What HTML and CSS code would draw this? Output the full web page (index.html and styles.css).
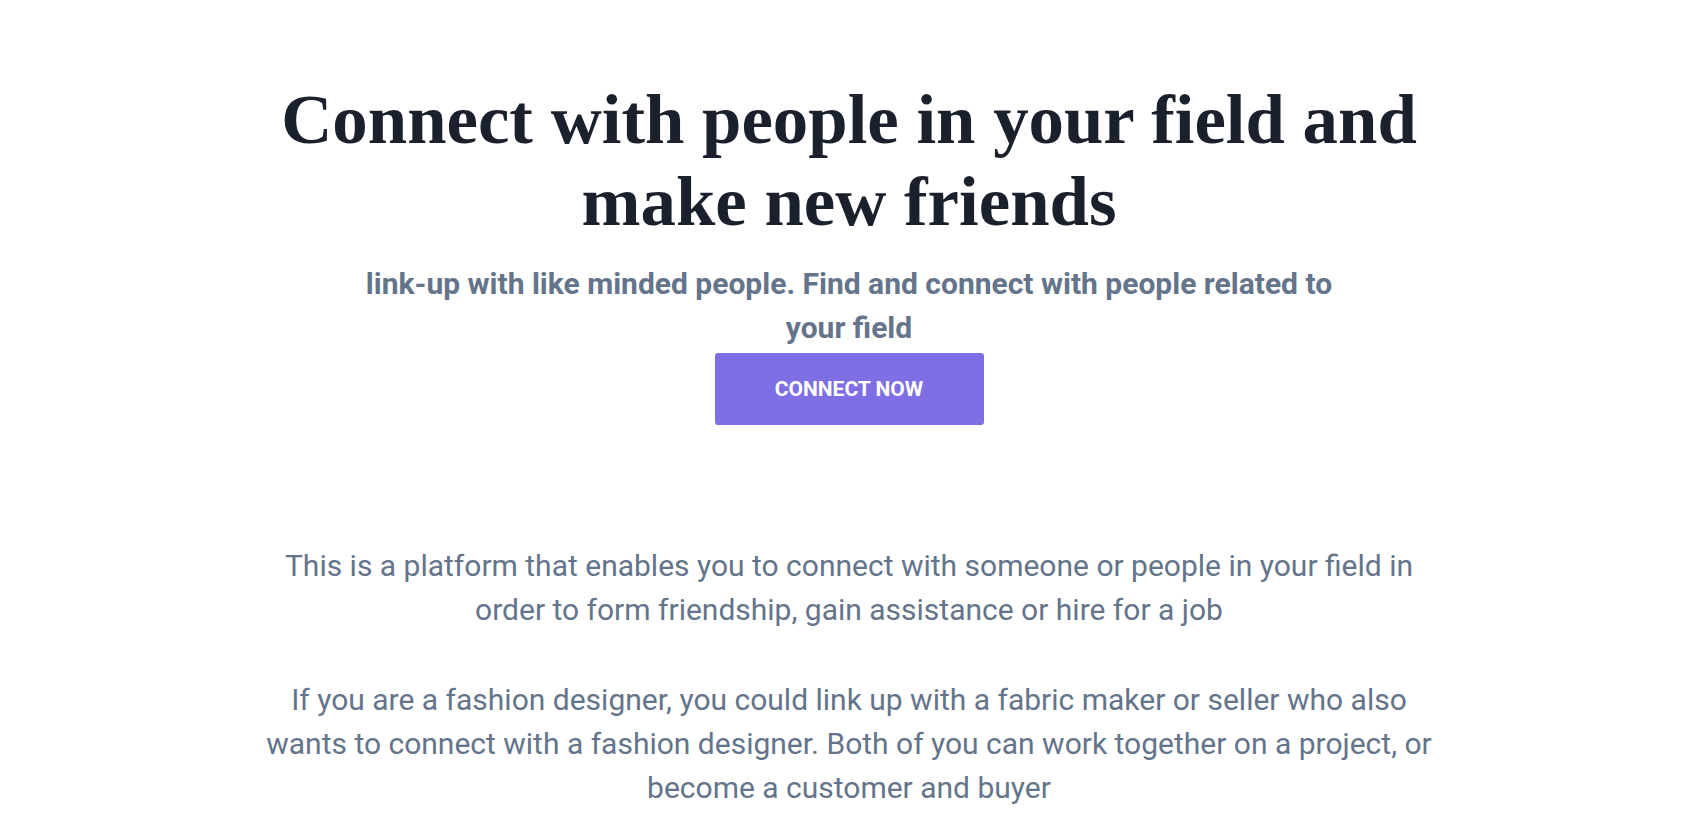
FILE: index.html
```html
<!DOCTYPE html>
<html lang="en">
<head>
<meta charset="utf-8">
<title>Connect</title>
<link rel="stylesheet" href="styles.css">
</head>
<body>
<main class="hero">
  <h1 class="hero-title">Connect with people in your field and make new friends</h1>
  <p class="hero-sub">link-up with like minded people. Find and connect with people related to your field</p>
  <a class="btn" href="#">CONNECT NOW</a>
  <section class="about">
    <p class="about-text">This is a platform that enables you to connect with someone or people in your field in order to form friendship, gain assistance or hire for a job</p>
    <p class="about-text">If you are a fashion designer, you could link up with a fabric maker or seller who also wants to connect with a fashion designer. Both of you can work together on a project, or become a customer and buyer</p>
  </section>
</main>
</body>
</html>
```

FILE: styles.css
```css
* { box-sizing: border-box; }
html, body { margin: 0; padding: 0; background: #ffffff; }
body { font-family: Roboto, "Liberation Sans", sans-serif; }

.hero {
  display: flex;
  flex-direction: column;
  align-items: center;
  text-align: center;
  padding-top: 78px;
}

.hero-title {
  margin: 0;
  max-width: 1180px;
  font-family: "Liberation Serif", "DejaVu Serif", serif;
  font-weight: 700;
  font-size: 70.8px;
  line-height: 82px;
  color: #1a202c;
}

.hero-sub {
  margin: 20px 0 0;
  max-width: 1000px;
  font-size: 30px;
  font-weight: 700;
  line-height: 44px;
  color: #64748b;
}

.btn {
  margin-top: 3px;
  width: 269px;
  height: 72px;
  display: flex;
  align-items: center;
  justify-content: center;
  background: #7f6fe4;
  border-radius: 3px;
  color: #ffffff;
  font-size: 21px;
  font-weight: 700;
  text-decoration: none;
}

.about {
  margin-top: 119px;
  max-width: 1190px;
  display: flex;
  flex-direction: column;
  gap: 46px;
}

.about-text {
  margin: 0;
  font-size: 30px;
  line-height: 44px;
  color: #64748b;
}
```
